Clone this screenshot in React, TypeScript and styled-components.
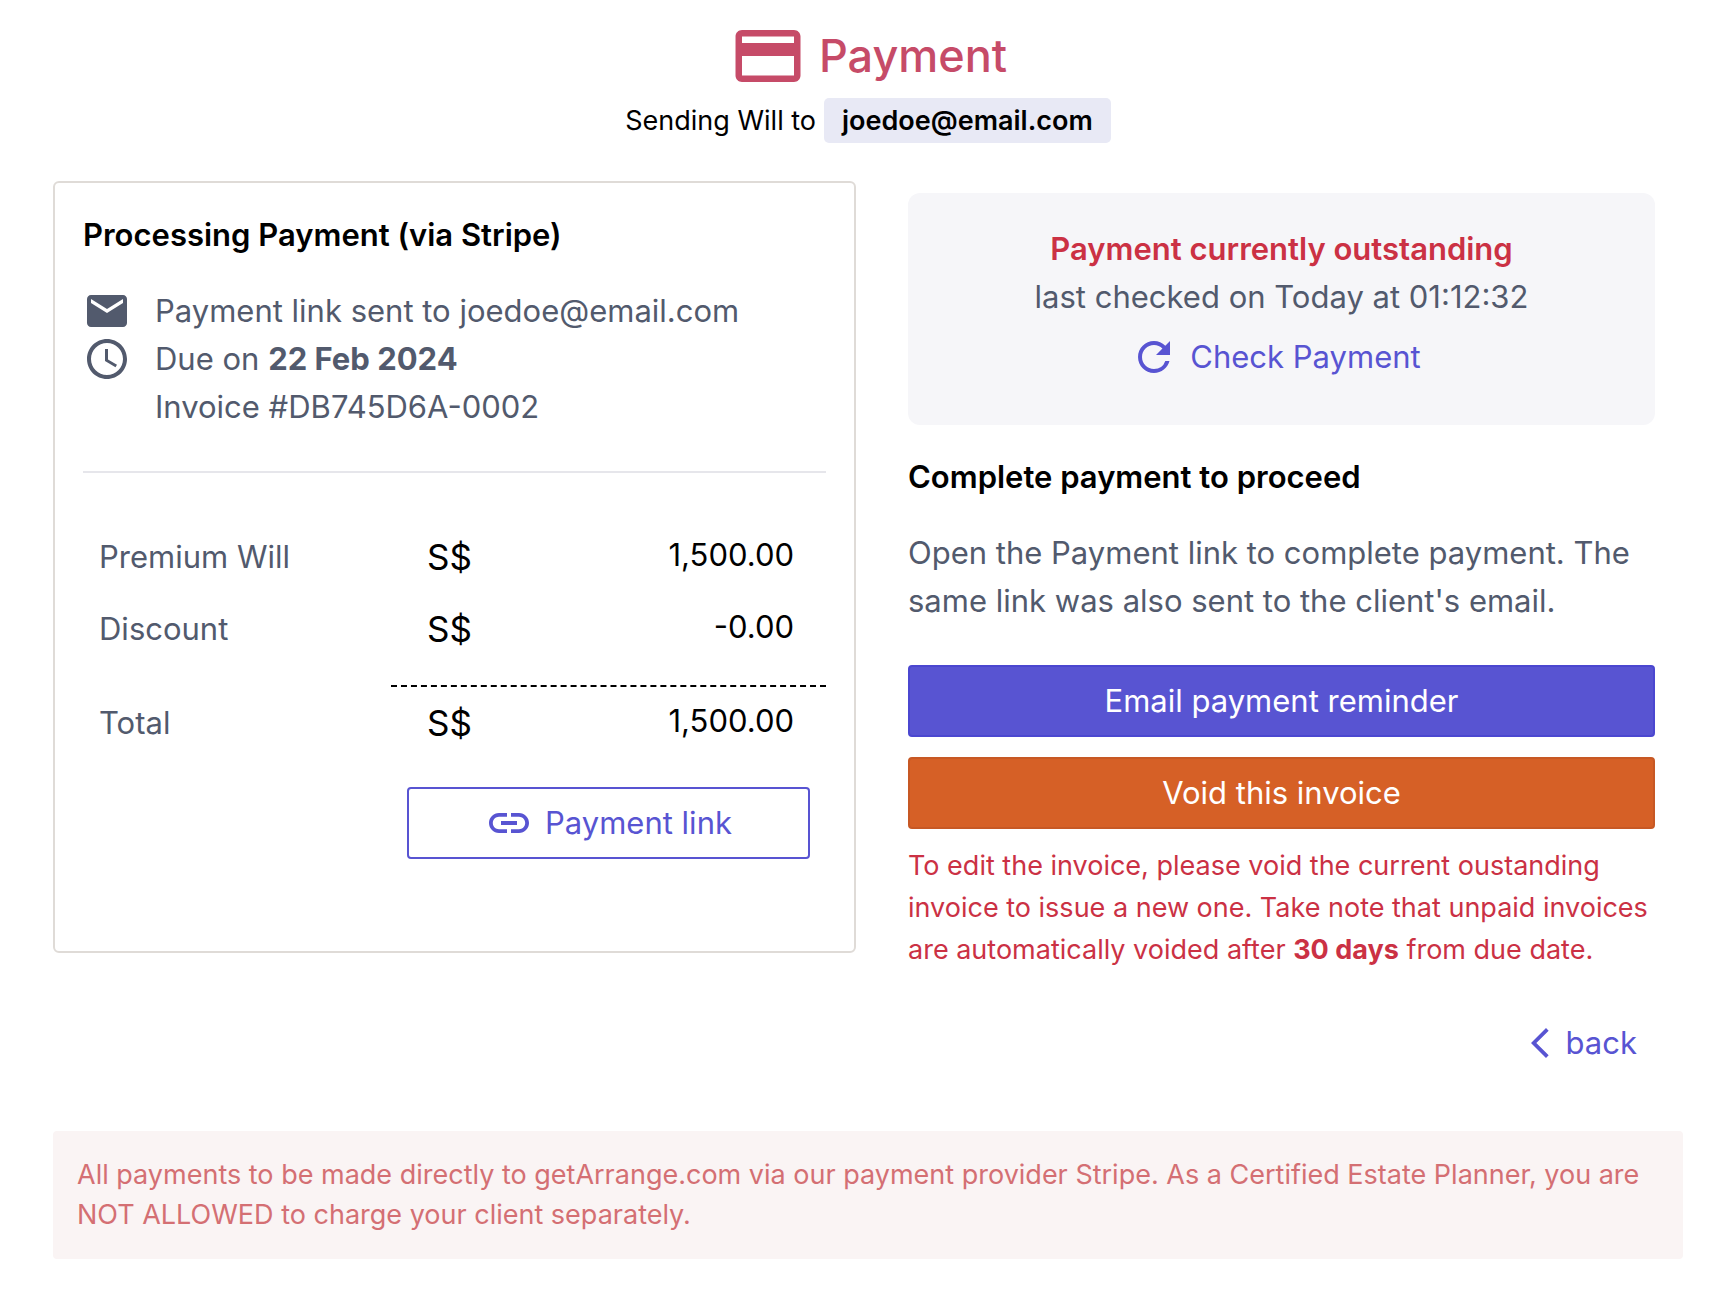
import React from "react";
import styled, { createGlobalStyle, css } from "styled-components";
import {
  MdAccessTime,
  MdArrowBackIosNew,
  MdEmail,
  MdLink,
  MdPayment,
  MdRefresh,
} from "react-icons/md";

const color = {
  text: "#000000",
  muted: "#525a6d",
  primary: "#5854d2",
  primaryEdge: "#4b47d0",
  warn: "#d66026",
  warnEdge: "#c75824",
  danger: "#cb3144",
  brand: "#c64b68",
  line: "#dfdbd7",
  rule: "#e6e6eb",
};

const GlobalStyle = createGlobalStyle`
  *, *::before, *::after { box-sizing: border-box; }
  body {
    margin: 0;
    background: #ffffff;
    color: ${color.text};
    font-family: Inter, "Liberation Sans", sans-serif;
    font-size: 31px;
    line-height: 48px;
  }
  h1, h2, p, ul { margin: 0; padding: 0; }
  svg { display: block; flex: none; }
`;

const Page = styled.main`
  padding: 17px 51px 44px 53px;
`;

const Header = styled.header`
  display: flex;
  flex-direction: column;
  align-items: center;
  gap: 3px;
`;

const Title = styled.h1`
  display: flex;
  align-items: center;
  gap: 12px;
  color: ${color.brand};
  font-size: 45px;
  font-weight: 500;
  line-height: 76px;
`;

const Recipient = styled.p`
  display: flex;
  align-items: center;
  gap: 8px;
  font-size: 27px;
  line-height: 45px;
`;

const EmailChip = styled.strong`
  padding: 0 18px;
  border-radius: 5px;
  background: #e8e9f5;
  font-weight: 600;
`;

const Columns = styled.div`
  display: grid;
  grid-template-columns: 1fr 1fr;
  align-items: start;
  margin-top: 38px;
`;

const Card = styled.section`
  margin-right: 12px;
  padding: 28px 28px 92px;
  border: 2px solid ${color.line};
  border-radius: 6px;
`;

const Heading = styled.h2`
  font-size: 31px;
  font-weight: 600;
  line-height: 48px;
`;

const Details = styled.ul`
  margin-top: 28px;
  padding-bottom: 40px;
  border-bottom: 2px solid ${color.rule};
  color: ${color.muted};
  list-style: none;
`;

const Detail = styled.li`
  display: grid;
  grid-template-columns: 48px 1fr;
  column-gap: 24px;
`;

const DetailText = styled.span`
  grid-column: 2;
`;

const Table = styled.table`
  width: 100%;
  margin-top: 48px;
  border-collapse: separate;
  border-spacing: 0;
`;

const rowCell = css`
  height: 72px;
  vertical-align: middle;
`;

const Label = styled.th`
  ${rowCell}
  width: 308px;
  padding: 0 0 0 16px;
  color: ${color.muted};
  font-weight: 400;
  text-align: left;
`;

const Currency = styled.td`
  ${rowCell}
  padding: 0 0 0 36px;
  font-size: 35px;
`;

const Amount = styled.td`
  ${rowCell}
  padding: 0 32px 4px 0;
  text-align: right;
`;

const SumLine = styled.td`
  height: 22px;
  padding: 0;
  border-bottom: 2px dashed #000000;
`;

const buttonBase = css`
  display: flex;
  align-items: center;
  justify-content: center;
  gap: 12px;
  height: 72px;
  border-radius: 4px;
  font: inherit;
  cursor: pointer;
`;

const PaymentLink = styled.a`
  ${buttonBase}
  margin: 28px 16px 0 324px;
  border: 2px solid ${color.primary};
  color: ${color.primary};
  text-decoration: none;
`;

const Side = styled.section`
  padding: 12px 28px 0 40px;
`;

const Status = styled.div`
  display: flex;
  flex-direction: column;
  align-items: center;
  padding: 32px 32px 44px;
  border-radius: 12px;
  background: #f6f6f9;
  color: ${color.muted};
  text-align: center;
`;

const Outstanding = styled.strong`
  color: ${color.danger};
  font-weight: 600;
`;

const TextButton = styled.button<{ $gap: number }>`
  display: flex;
  align-items: center;
  gap: ${(p) => p.$gap}px;
  height: 48px;
  padding: 0;
  border: 0;
  background: none;
  color: ${color.primary};
  font: inherit;
  cursor: pointer;
`;

const CheckButton = styled(TextButton)`
  margin: 12px 12px 0 0;
`;

const Next = styled.div`
  margin-top: 28px;
`;

const Instructions = styled.p`
  margin-top: 28px;
  color: ${color.muted};
`;

const Actions = styled.div`
  display: flex;
  flex-direction: column;
  gap: 20px;
  margin-top: 40px;
`;

const ActionButton = styled.button<{ $tone: "primary" | "warn" }>`
  ${buttonBase}
  width: 100%;
  border: 2px solid ${(p) => (p.$tone === "primary" ? color.primaryEdge : color.warnEdge)};
  background: ${(p) => (p.$tone === "primary" ? color.primary : color.warn)};
  color: #ffffff;
`;

const VoidNote = styled.p`
  margin-top: 16px;
  color: ${color.danger};
  font-size: 27px;
  line-height: 42px;
`;

const BackRow = styled.div`
  display: flex;
  justify-content: flex-end;
  margin-top: 48px;
  padding-right: 18px;
`;

const Notice = styled.p`
  margin-top: 64px;
  padding: 24px;
  border-radius: 4px;
  background: #faf4f4;
  color: #d46f73;
  font-size: 27px;
  line-height: 40px;
`;

export default function App() {
  return (
    <>
      <GlobalStyle />
      <Page>
        <Header>
          <Title>
            <MdPayment size={78} aria-hidden />
            Payment
          </Title>
          <Recipient>
            Sending Will to <EmailChip>joedoe@email.com</EmailChip>
          </Recipient>
        </Header>

        <Columns>
          <Card>
            <Heading>Processing Payment (via Stripe)</Heading>
            <Details>
              <Detail>
                <MdEmail size={48} aria-hidden />
                <DetailText>Payment link sent to joedoe@email.com</DetailText>
              </Detail>
              <Detail>
                <MdAccessTime size={48} aria-hidden />
                <DetailText>
                  Due on <strong>22 Feb 2024</strong>
                </DetailText>
              </Detail>
              <Detail>
                <DetailText>Invoice #DB745D6A-0002</DetailText>
              </Detail>
            </Details>

            <Table>
              <tbody>
                <tr>
                  <Label scope="row">Premium Will</Label>
                  <Currency>S$</Currency>
                  <Amount>1,500.00</Amount>
                </tr>
                <tr>
                  <Label scope="row">Discount</Label>
                  <Currency>S$</Currency>
                  <Amount>-0.00</Amount>
                </tr>
                <tr aria-hidden>
                  <td />
                  <SumLine colSpan={2} />
                </tr>
                <tr>
                  <Label scope="row">Total</Label>
                  <Currency>S$</Currency>
                  <Amount>1,500.00</Amount>
                </tr>
              </tbody>
            </Table>

            <PaymentLink href="#payment-link">
              <MdLink size={48} aria-hidden />
              Payment link
            </PaymentLink>
          </Card>

          <Side>
            <Status>
              <Outstanding>Payment currently outstanding</Outstanding>
              <span>last checked on Today at 01:12:32</span>
              <CheckButton type="button" $gap={12}>
                <MdRefresh size={48} aria-hidden />
                Check Payment
              </CheckButton>
            </Status>

            <Next>
              <Heading>Complete payment to proceed</Heading>
              <Instructions>
                Open the Payment link to complete payment. The same link was also sent to the
                client's email.
              </Instructions>
              <Actions>
                <ActionButton type="button" $tone="primary">
                  Email payment reminder
                </ActionButton>
                <ActionButton type="button" $tone="warn">
                  Void this invoice
                </ActionButton>
              </Actions>
              <VoidNote>
                To edit the invoice, please void the current oustanding invoice to issue a new
                one. Take note that unpaid invoices are automatically voided after{" "}
                <strong>30 days</strong> from due date.
              </VoidNote>
            </Next>

            <BackRow>
              <TextButton type="button" $gap={8}>
                <MdArrowBackIosNew size={36} aria-hidden />
                back
              </TextButton>
            </BackRow>
          </Side>
        </Columns>

        <Notice>
          All payments to be made directly to getArrange.com via our payment provider Stripe. As a
          Certified Estate Planner, you are NOT ALLOWED to charge your client separately.
        </Notice>
      </Page>
    </>
  );
}
